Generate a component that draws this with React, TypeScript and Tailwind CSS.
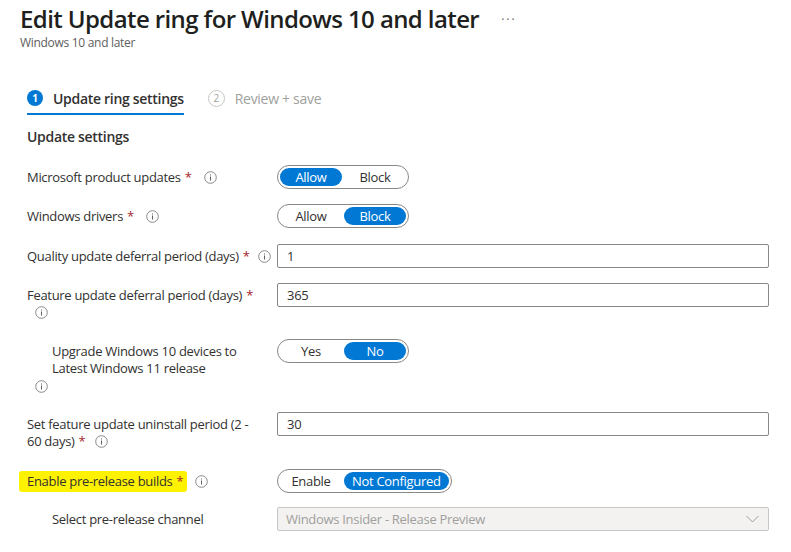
import React from 'react';

const font = { fontFamily: '"Open Sans", "Noto Sans", sans-serif' };

const InfoIcon = ({ className = '' }: { className?: string }) => (
  <svg width="13" height="13" viewBox="0 0 13 13" className={`shrink-0 ${className}`}>
    <circle cx="6.5" cy="6.5" r="5.8" fill="none" stroke="#8a8886" strokeWidth="1" />
    <rect x="6" y="5.5" width="1" height="4" fill="#605e5c" />
    <rect x="6" y="3.5" width="1" height="1" fill="#605e5c" />
  </svg>
);

const Star = () => <span className="text-[#a4262c] ml-[4px]">*</span>;

interface ToggleProps {
  options: string[];
  selected: number;
}

const Toggle = ({ options, selected }: ToggleProps) => (
  <div className="inline-flex h-[24px] items-center gap-[2px] rounded-full border border-[#8a8886] px-[2px] bg-white">
    {options.map((opt, i) => (
      <span
        key={opt}
        className={`flex h-[18px] min-w-[62px] items-center justify-center rounded-full px-[8px] text-[13px] ${
          i === selected ? 'bg-[#0078d4] text-white' : 'text-[#323130]'
        }`}
      >
        {opt}
      </span>
    ))}
  </div>
);

const TextInput = ({ value }: { value: string }) => (
  <div className="flex h-[24px] w-full items-center rounded-[2px] border border-[#8a8886] bg-white pl-[9px] text-[13px] text-[#323130]">
    {value}
  </div>
);

export default function App() {
  return (
    <div className="min-h-screen w-[791px] bg-white text-[#323130] tracking-[-0.3px]" style={font}>
      {/* Header */}
      <div className="px-[20px] pt-[2px]">
        <div className="flex items-center">
          <h1 className="text-[24px] font-semibold leading-[34px] tracking-[-0.6px] text-[#201f1e]">
            Edit Update ring for Windows 10 and later
          </h1>
          <span className="ml-[22px] mt-[2px] text-[12px] tracking-[2px] text-[#605e5c]">···</span>
        </div>
        <div className="mt-[-1px] text-[12px] leading-[16px] text-[#605e5c]">Windows 10 and later</div>
      </div>

      <div className="pl-[27px] pr-[22px]">
        {/* Steps */}
        <div className="mt-[35px] flex items-start">
          <div className="flex flex-col">
            <div className="flex h-[24px] items-center">
              <span className="flex h-[16px] w-[16px] items-center justify-center rounded-full bg-[#0078d4] text-[10px] font-bold text-white">
                1
              </span>
              <span className="ml-[10px] text-[14px] font-semibold text-[#323130]">Update ring settings</span>
            </div>
            <div className="mt-[3px] h-[2px] w-full bg-[#0078d4]" />
          </div>
          <div className="ml-[24px] flex h-[24px] items-center">
            <span className="flex h-[17px] w-[17px] items-center justify-center rounded-full border border-[#c8c6c4] text-[10px] text-[#a19f9d]">
              2
            </span>
            <span className="ml-[10px] text-[14px] text-[#a19f9d]">Review + save</span>
          </div>
        </div>

        {/* Section title */}
        <div className="mt-[12px] text-[14px] font-semibold leading-[20px] text-[#323130]">Update settings</div>

        {/* Rows */}
        <div className="mt-[18px] flex flex-col text-[13px] leading-[17px]">
          <div className="flex items-start">
            <div className="flex w-[250px] items-center whitespace-nowrap pt-[4px]">
              Microsoft product updates
              <Star />
              <InfoIcon className="ml-[12px]" />
            </div>
            <Toggle options={['Allow', 'Block']} selected={0} />
          </div>

          <div className="mt-[15px] flex items-start">
            <div className="flex w-[250px] items-center whitespace-nowrap pt-[4px]">
              Windows drivers
              <Star />
              <InfoIcon className="ml-[12px]" />
            </div>
            <Toggle options={['Allow', 'Block']} selected={1} />
          </div>

          <div className="mt-[16px] flex items-start">
            <div className="flex w-[250px] items-center whitespace-nowrap pt-[4px]">
              Quality update deferral period (days)
              <Star />
              <InfoIcon className="ml-[8px]" />
            </div>
            <div className="flex-1">
              <TextInput value="1" />
            </div>
          </div>

          <div className="mt-[15px] flex items-start">
            <div className="w-[250px] pt-[4px]">
              <div className="whitespace-nowrap">
                Feature update deferral period (days)
                <Star />
              </div>
              <InfoIcon className="ml-[8px] mt-[2px]" />
            </div>
            <div className="flex-1">
              <TextInput value="365" />
            </div>
          </div>

          <div className="mt-[20px] flex items-start">
            <div className="w-[250px] pt-[4px]">
              <div className="pl-[25px] whitespace-nowrap">
                Upgrade Windows 10 devices to
                <br />
                Latest Windows 11 release
              </div>
              <InfoIcon className="ml-[8px] mt-[3px]" />
            </div>
            <Toggle options={['Yes', 'No']} selected={1} />
          </div>

          <div className="mt-[19px] flex items-start">
            <div className="w-[250px] whitespace-nowrap pt-[4px]">
              Set feature update uninstall period (2 -
              <br />
              <span className="inline-flex items-center">
                60 days)
                <Star />
                <InfoIcon className="ml-[10px]" />
              </span>
            </div>
            <div className="flex-1">
              <TextInput value="30" />
            </div>
          </div>

          <div className="mt-[19px] flex items-start">
            <div className="flex h-[24px] w-[250px] items-center whitespace-nowrap">
              <span className="ml-[-8px] -skew-x-[4px] rounded-[3px] bg-[#fff200] py-[2px] pl-[8px] pr-[4px]">
                Enable pre-release builds
                <span className="text-[#a4262c] ml-[4px]">*</span>
              </span>
              <InfoIcon className="ml-[8px]" />
            </div>
            <Toggle options={['Enable', 'Not Configured']} selected={1} />
          </div>

          <div className="mt-[14px] flex items-start">
            <div className="w-[250px] whitespace-nowrap pl-[25px] pt-[4px]">Select pre-release channel</div>
            <div className="flex h-[24px] flex-1 items-center justify-between rounded-[2px] border border-[#c8c6c4] bg-[#f3f2f1] pl-[8px] pr-[9px] text-[#a19f9d]">
              <span>Windows Insider - Release Preview</span>
              <svg width="13" height="8" viewBox="0 0 13 8">
                <path d="M0.5 1 L6.5 7 L12.5 1" fill="none" stroke="#a19f9d" strokeWidth="1" />
              </svg>
            </div>
          </div>
        </div>
      </div>
    </div>
  );
}
